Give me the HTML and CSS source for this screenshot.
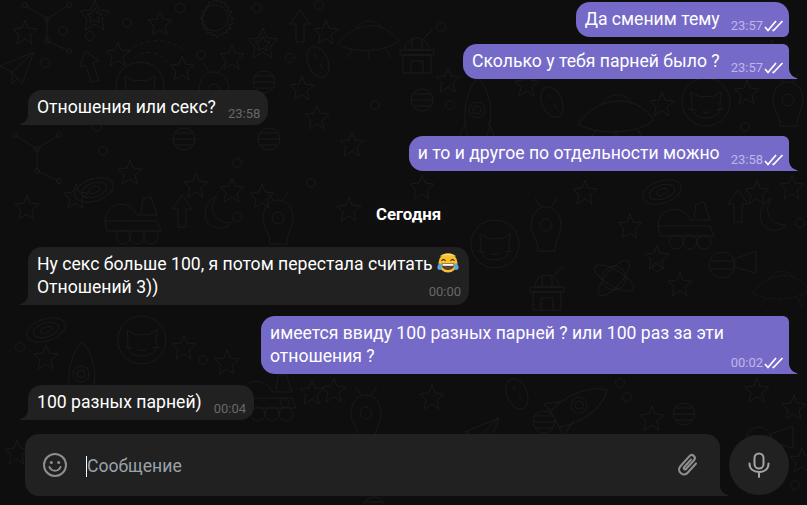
FILE: index.html
```html
<!DOCTYPE html>
<html lang="ru">
<head>
    <meta charset="UTF-8">
    <title>Чат</title>
    <link rel="stylesheet" href="styles.css">
</head>
<body>
<svg class="doodles" width="807" height="505" aria-hidden="true">
    <defs>
        <path id="star" d="M12 0l3 8 9 1-7 6 2 9-7-5-8 5 2-9-6-6 9-1z"/>
        <g id="star2"><path d="M15 0l4 10 11 1-8 8 2 11-9-6-10 6 2-11-7-8 11-1z"/><path d="M15 8l2 5 5 1-4 4 1 5-4-3-5 3 1-5-4-4 5-1z"/></g>
        <g id="planet"><circle cx="14" cy="14" r="11"/><path d="M4 8h20M3 14h22M5 20h18"/></g>
        <g id="rocket"><path d="M20 0c14 14 16 40 8 60H10C4 40 6 14 20 0z"/><circle cx="19" cy="32" r="8"/><circle cx="19" cy="32" r="4"/><path d="M8 44L0 62l10-2M30 44l8 18-10-2"/></g>
        <g id="ufo"><path d="M0 34C20 6 56 2 76 30 60 44 20 46 0 34z"/><path d="M24 14C30 2 48 2 54 14M18 40l-8 12M60 40l6 12M38 42v10"/></g>
        <g id="cat"><circle cx="24" cy="24" r="24"/><path d="M10 26l-1-12 9 5c4-1 8-1 12 0l9-5-1 12c2 10-6 14-14 14s-16-4-14-14z"/><path d="M18 28h1M30 28h1M20 33c2 2 6 2 8 0M6 31l8 1M42 31l-8 1"/></g>
        <g id="spiral"><ellipse cx="20" cy="14" rx="20" ry="11" transform="rotate(-18 20 14)"/><ellipse cx="20" cy="14" rx="13" ry="7" transform="rotate(-18 20 14)"/><ellipse cx="20" cy="14" rx="6" ry="3" transform="rotate(-18 20 14)"/></g>
        <g id="dome"><path d="M5 22C5 6 29 6 29 22zM0 22h34v5H0zM3 27h28v18H3zM11 45V33h12v12M24 10l9-9"/><path d="M12 11v11M22 11v11"/></g>
        <g id="moon"><path d="M12 0C3 10 8 27 26 27 19 36 2 34 0 19 0 10 5 3 12 0z"/></g>
        <g id="rover"><path d="M0 26C0 6 26 4 32 20h20L46 2 38 4l-2 14M0 26h52l4 10H2z"/><circle cx="18" cy="42" r="7"/><circle cx="32" cy="42" r="7"/><circle cx="46" cy="42" r="7"/></g>
        <g id="alien"><path d="M16 10c10 0 15 9 15 18 0 10-6 14-6 26H8C8 42 1 38 1 28 1 19 6 10 16 10z"/><circle cx="16" cy="28" r="6"/><path d="M11 10L5 1M21 10l6-9"/></g>
        <g id="sun"><circle cx="20" cy="20" r="13"/><path d="M20 1l2 3 3-3 1 4 4-1v4l4 1-2 3 5 2-3 3 5 3-4 2 3 4-4 1 2 4-4 0 0 4-4-1-1 4-3-2-2 4-2-4-3 2-1-4-4 1 0-4-4 0 2-4-4-1 3-4-4-2 5-3-3-3 5-2-2-3 4-1V4l4 1 1-4 3 3z"/></g>
        <g id="plane"><path d="M0 14L34 0 22 32 12 20zM12 20L34 0M12 20v12l6-6"/></g>
        <g id="arrow"><path d="M10 0l10 14h-6v18H6V14H0z"/></g>
        <g id="comet"><path stroke-dasharray="4 3" d="M0 14C14 0 42-2 58 14M6 20C16 12 30 12 40 24"/></g>
        <g id="pill"><ellipse cx="12" cy="18" rx="10" ry="16" transform="rotate(-22 12 18)"/><path d="M8 10l3 4M14 20l3 5"/></g>
        <g id="tri"><path d="M5 5l22 14 22-14M27 19v22l22 10M27 41"/><circle cx="5" cy="5" r="2.500"/><circle cx="27" cy="19" r="2.500"/><circle cx="49" cy="5" r="2.500"/><circle cx="27" cy="41" r="2.500"/><circle cx="49" cy="51" r="2.500"/></g>
        <g id="atom"><ellipse cx="22" cy="20" rx="22" ry="8" transform="rotate(30 22 20)"/><ellipse cx="22" cy="20" rx="22" ry="8" transform="rotate(-50 22 20)"/><circle cx="22" cy="20" r="12"/></g>
        <g id="tele"><circle cx="14" cy="20" r="13"/><path d="M26 14l22-8v22l-22-6zM3 16h22M3 24h22"/></g>
        <circle id="dot" cx="5" cy="5" r="4.500"/>
    </defs>
    <g class="doodle-lines">
        <use href="#tri" x="20" y="0"/><use href="#star" x="13" y="20"/><use href="#star2" x="80" y="0"/><use href="#star" x="148" y="11"/>
        <use href="#dot" x="58" y="26"/><use href="#dot" x="122" y="18"/><use href="#dot" x="85" y="31"/><use href="#dot" x="175" y="3"/><use href="#dot" x="252" y="3"/><use href="#dot" x="314" y="0"/>
        <use href="#sun" x="195" y="-2"/><use href="#star2" x="248" y="28"/><use href="#arrow" x="290" y="10"/><use href="#star" x="314" y="20"/><use href="#ufo" x="335" y="15" transform="translate(70 5) scale(.8)"/>
        <use href="#star" x="106" y="42"/><use href="#comet" x="128" y="38"/><use href="#star" x="170" y="56"/><use href="#dot" x="196" y="50"/><use href="#star" x="220" y="45"/>
        <use href="#pill" x="306" y="44"/><use href="#dot" x="285" y="53"/><use href="#plane" x="0" y="52"/><use href="#arrow" x="80" y="50" transform="rotate(-18 90 66)"/><use href="#dot" x="40" y="58"/>
        <use href="#cat" x="116" y="62"/><use href="#alien" x="198" y="62"/><use href="#planet" x="250" y="68"/><use href="#star" x="290" y="76"/>

        <use href="#dome" x="400" y="28"/><use href="#planet" x="408" y="86"/><use href="#rocket" x="458" y="78"/><use href="#star" x="436" y="68"/><use href="#star" x="515" y="72"/>
        <use href="#dot" x="436" y="22"/><use href="#dot" x="445" y="100"/><use href="#dot" x="740" y="122"/><use href="#pill" x="540" y="84"/>
        <use href="#ufo" x="578" y="90"/><use href="#star" x="650" y="92"/><use href="#cat" x="682" y="78"/><use href="#star" x="735" y="80"/><use href="#alien" x="772" y="72"/><use href="#star" x="760" y="40"/>

        <use href="#planet" x="170" y="125" /><use href="#planet" x="255" y="125"/><use href="#star" x="305" y="105"/><use href="#star" x="340" y="132"/><use href="#dot" x="370" y="100"/>
        <use href="#tri" x="10" y="130"/><use href="#dot" x="98" y="146"/><use href="#dot" x="232" y="158"/><use href="#dot" x="232" y="212"/><use href="#dot" x="92" y="122"/>
        <use href="#star" x="15" y="195"/><use href="#star" x="64" y="184"/><use href="#spiral" x="74" y="176"/><use href="#rover" x="105" y="195"/><use href="#star" x="118" y="160"/><use href="#star" x="184" y="173"/>
        <use href="#arrow" x="172" y="195"/><use href="#moon" x="205" y="196"/><use href="#star" x="220" y="178"/><use href="#star" x="250" y="184"/>

        <use href="#alien" x="262" y="190"/><use href="#star" x="337" y="197"/><use href="#dot" x="306" y="178"/><use href="#star" x="410" y="175"/><use href="#cat" x="471" y="220"/>
        <use href="#alien" x="530" y="197"/><use href="#star" x="573" y="180"/><use href="#star" x="618" y="214"/><use href="#spiral" x="642" y="178"/><use href="#rover" x="658" y="200"/>
        <use href="#arrow" x="728" y="190"/><use href="#moon" x="760" y="198"/><use href="#star" x="745" y="180"/><use href="#star" x="780" y="175"/><use href="#dot" x="795" y="218"/>
        <use href="#dome" x="530" y="265"/><use href="#atom" x="592" y="258"/><use href="#star" x="668" y="272"/><use href="#tele" x="708" y="245"/><use href="#ufo" x="750" y="270" transform="translate(190 65) scale(.75)"/><use href="#star" x="645" y="245"/><use href="#dot" x="652" y="262"/>

        <use href="#spiral" x="26" y="316"/><use href="#cat" x="118" y="316"/><use href="#star" x="34" y="345"/><use href="#rocket" x="62" y="342"/><use href="#star" x="172" y="335"/><use href="#star" x="215" y="350"/><use href="#dot" x="198" y="355"/><use href="#dot" x="15" y="342"/>
        <use href="#rover" x="240" y="372"/><use href="#star" x="300" y="380"/><use href="#star" x="322" y="378"/><use href="#dot" x="280" y="398"/><use href="#pill" x="505" y="376"/><use href="#star" x="420" y="385"/><use href="#alien" x="350" y="385"/>
        <use href="#rocket" x="570" y="380" transform="rotate(60 590 400) scale(1)"/><use href="#dot" x="615" y="378"/><use href="#dot" x="622" y="392"/><use href="#star" x="745" y="378"/><use href="#star" x="640" y="406"/><use href="#planet" x="530" y="408"/><use href="#plane" x="465" y="418"/><use href="#planet" x="670" y="400"/><use href="#star" x="782" y="395"/>

        <use href="#star" x="5" y="440"/><use href="#tele" x="745" y="420"/><use href="#star" x="790" y="448"/><use href="#planet" x="360" y="494"/><use href="#dot" x="790" y="480"/>
    </g>
</svg>

<main class="chat">
    <section class="messages">
        <div class="bubble out first">
            <span class="text">Да сменим тему</span>
            <span class="meta">23:57<svg class="ticks" width="20" height="12" viewBox="0 0 20 12"><path d="M1 7l3 3.500L12 1M8.500 10l1 .5L18.500 1"/></svg></span>
        </div>
        <div class="bubble out tail">
            <span class="text">Сколько у тебя парней было ?</span>
            <span class="meta">23:57<svg class="ticks" width="20" height="12" viewBox="0 0 20 12"><path d="M1 7l3 3.500L12 1M8.500 10l1 .5L18.500 1"/></svg></span>
        </div>
        <div class="bubble in tail gap">
            <span class="text">Отношения или секс?</span>
            <span class="meta">23:58</span>
        </div>
        <div class="bubble out tail gap">
            <span class="text">и то и другое по отдельности можно</span>
            <span class="meta">23:58<svg class="ticks" width="20" height="12" viewBox="0 0 20 12"><path d="M1 7l3 3.500L12 1M8.500 10l1 .5L18.500 1"/></svg></span>
        </div>

        <div class="date">Сегодня</div>

        <div class="bubble in tail multi">
            <span class="text">Ну секс больше 100, я потом перестала считать <svg class="emoji" width="22" height="20" viewBox="0 0 22 20"><circle cx="11" cy="10" r="9.500" fill="#fbc02d"/><path d="M3 3.500C5 1 8 .5 11 .5s6 .5 8 3C16 1.800 6 1.800 3 3.500z" fill="#ffdd67"/><path d="M4.500 8C5.500 6 7.500 6 8.500 8M13.500 8c1-2 3-2 4 0" fill="none" stroke="#5d4037" stroke-width="1.300"/><path d="M4.500 10.500h13C17.500 15 14.500 17 11 17s-6.500-2-6.500-6.500z" fill="#5d4037"/><path d="M5.500 11h11v1.800h-11z" fill="#fff"/><path d="M3 10c-2 1.500-3 3.500-2.500 5.500C1 17 3.500 17.500 4.500 16 5.500 14 4 12 3 10zM19 10c2 1.500 3 3.500 2.500 5.500-.5 1.500-3 2-4 .5-1-2 .5-4 1.500-6z" fill="#4fa8e8"/></svg><br>Отношений 3))</span>
            <span class="meta">00:00</span>
        </div>
        <div class="bubble out tail multi wide gap">
            <span class="text">имеется ввиду 100 разных парней ? или 100 раз за эти<br>отношения ?</span>
            <span class="meta">00:02<svg class="ticks" width="20" height="12" viewBox="0 0 20 12"><path d="M1 7l3 3.500L12 1M8.500 10l1 .5L18.500 1"/></svg></span>
        </div>
        <div class="bubble in tail gap">
            <span class="text">100 разных парней)</span>
            <span class="meta">00:04</span>
        </div>
    </section>

    <footer class="composer">
        <div class="input-box">
            <svg class="icon" width="26" height="26" viewBox="0 0 26 26"><circle cx="13" cy="13" r="11"/><circle cx="9.300" cy="10.500" r="1.500" class="solid"/><circle cx="16.700" cy="10.500" r="1.500" class="solid"/><path d="M7.500 15c1 2.500 3 3.700 5.500 3.700s4.500-1.200 5.500-3.700"/></svg>
            <div class="input"><span class="caret"></span>Сообщение</div>
            <svg class="icon" width="26" height="26" viewBox="0 0 24 24"><path transform="rotate(42 12 12)" d="M16.500 6v11.500a4.500 4.500 0 0 1-9 0V5a2.800 2.800 0 0 1 5.600 0v11a1.200 1.200 0 0 1-2.400 0V6.500"/></svg>
        </div>
        <button class="mic" type="button" aria-label="Голосовое сообщение">
            <svg class="icon" width="24" height="26" viewBox="0 0 24 26"><rect x="7.500" y="1.500" width="9" height="15" rx="4.500"/><path d="M2.500 11.500c0 5.500 4 8.500 9.500 8.500s9.500-3 9.500-8.500M12 20v5"/></svg>
        </button>
    </footer>
</main>
</body>
</html>
```

FILE: styles.css
```css
html, body {
    margin: 0;
    height: 505px;
    overflow: hidden;
}
body {
    position: relative;
    font-family: Roboto, "Noto Sans", sans-serif;
    font-size: 17.600px;
    line-height: 23px;
    color: #fff;
    background-color: #0e0e0e;
}
.doodles {
    position: absolute;
    top: 0;
    left: 0;
}
.doodle-lines {
    fill: none;
    stroke: #1a1a1a;
    stroke-width: 1;
}
.chat {
    position: relative;
    height: 505px;
    display: flex;
    flex-direction: column;
    justify-content: space-between;
    box-sizing: border-box;
    padding: 2px 18px 9px 25px;
}
.messages {
    display: flex;
    flex-direction: column;
    padding-left: 3px;
}
.bubble {
    position: relative;
    display: flex;
    align-items: flex-end;
    gap: 11px;
    box-sizing: border-box;
    padding: 6px 5px 6px 9px;
    border-radius: 14px;
}
.bubble.out {
    align-self: flex-end;
    background-color: #766ac8;
    margin-top: 7px;
}
.bubble.out.first {
    margin-top: 0;
    border-bottom-right-radius: 6px;
}
.bubble.in {
    align-self: flex-start;
    gap: 12px;
    padding-right: 8px;
    background-color: #212121;
}
.bubble.gap {
    margin-top: 11px;
}
.bubble.wide {
    width: 528px;
}
.bubble.multi {
    display: grid;
}
.bubble.multi .text, .bubble.multi .meta {
    grid-area: 1 / 1;
}
.bubble.in.multi .text {
    padding-right: 2px;
}
.bubble.multi .meta {
    justify-self: end;
    align-self: end;
}
.bubble.in.multi .meta {
    margin-bottom: -1px;
}
.bubble.tail.out {
    border-bottom-right-radius: 0;
    border-top-right-radius: 6px;
}
.bubble.tail.in {
    border-bottom-left-radius: 0;
}
.bubble.tail::after {
    content: "";
    position: absolute;
    bottom: 0;
    width: 9px;
    height: 11px;
    background-color: inherit;
}
.bubble.tail.out::after {
    left: 100%;
    clip-path: path("M0 0C0 5 3 9 8 10.200C8.500 10.500 8.500 11 8 11H0Z");
}
.bubble.tail.in::after {
    right: 100%;
    clip-path: path("M9 0C9 5 6 9 1 10.200C.5 10.500 .5 11 1 11H9Z");
}
.text {
    white-space: nowrap;
}
.emoji {
    vertical-align: -3px;
}
.meta {
    display: flex;
    align-items: center;
    gap: 1px;
    font-size: 13px;
    line-height: 16px;
    margin-bottom: -3px;
    color: #686868;
}
.out .meta {
    color: #bdb7e6;
}
.ticks {
    fill: none;
    stroke: #fff;
    stroke-width: 1.700;
}
.date {
    align-self: center;
    margin: 31px 0 21px;
    padding: 2px 10px;
    border-radius: 12px;
    background-color: #0f0f0f;
    font-size: 16.800px;
    font-weight: 700;
    line-height: 20px;
}
.composer {
    display: flex;
    align-items: center;
    gap: 9px;
}
.input-box {
    position: relative;
    flex: 1;
    height: 62px;
    display: flex;
    align-items: center;
    padding: 0 19px 0 17px;
    background-color: #212121;
    border-radius: 14px 14px 0 14px;
}
.input-box::after {
    content: "";
    position: absolute;
    left: 100%;
    bottom: 0;
    width: 9px;
    height: 11px;
    background-color: inherit;
    clip-path: path("M0 0C0 5 3 9 8 10.200C8.500 10.500 8.500 11 8 11H0Z");
}
.input {
    flex: 1;
    display: flex;
    align-items: center;
    margin: 2px 0 0 18px;
    color: #9ba3aa;
}
.caret {
    width: 1px;
    height: 21px;
    background-color: #fff;
}
.icon {
    fill: none;
    stroke: #8e8e8e;
    stroke-width: 2;
    stroke-linecap: round;
}
.icon .solid {
    fill: #8e8e8e;
    stroke: none;
}
.mic {
    width: 60px;
    height: 60px;
    display: flex;
    align-items: center;
    justify-content: center;
    padding: 0;
    border: none;
    border-radius: 50%;
    background-color: #212121;
}
.mic .icon {
    stroke: #a4a4a4;
}
```
